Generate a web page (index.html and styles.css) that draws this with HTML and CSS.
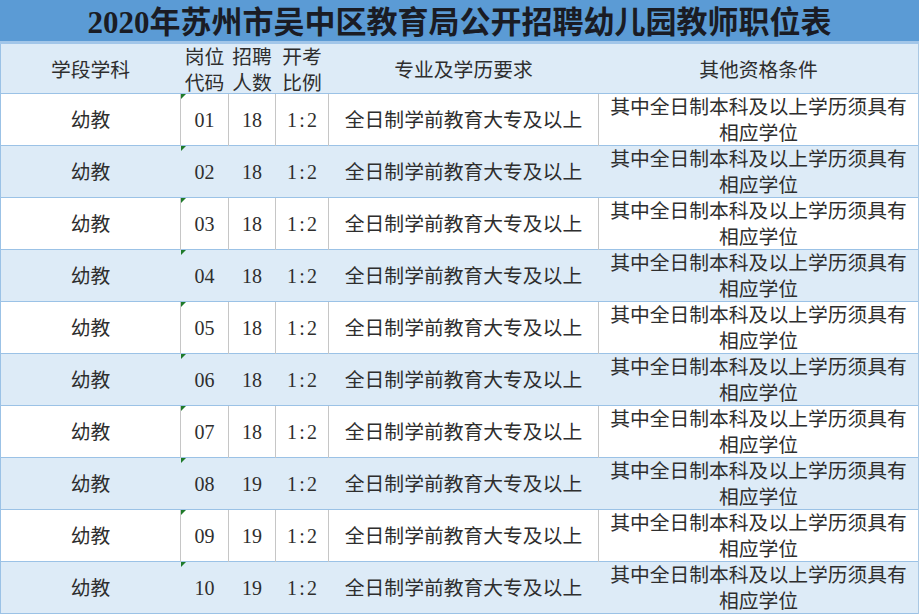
FILE: index.html
```html
<!DOCTYPE html>
<html lang="zh-CN">
<head>
<meta charset="utf-8">
<title>2020年苏州市吴中区教育局公开招聘幼儿园教师职位表</title>
<link rel="stylesheet" href="styles.css">
</head>
<body>
<div class="sheet">
  <div class="title">2020年苏州市吴中区教育局公开招聘幼儿园教师职位表</div>
  <div class="rows">
    <div class="row head">
      <div class="c">学段学科</div>
      <div class="c two">岗位<br>代码</div>
      <div class="c two">招聘<br>人数</div>
      <div class="c two">开考<br>比例</div>
      <div class="c">专业及学历要求</div>
      <div class="c">其他资格条件</div>
    </div>
    <div class="row odd">
      <div class="c">幼教</div><div class="c num flag">01</div><div class="c num">18</div><div class="c num">1<span class="colon">:</span>2</div>
      <div class="c">全日制学前教育大专及以上</div><div class="c two">其中全日制本科及以上学历须具有<br>相应学位</div>
    </div>
    <div class="row even">
      <div class="c">幼教</div><div class="c num flag">02</div><div class="c num">18</div><div class="c num">1<span class="colon">:</span>2</div>
      <div class="c">全日制学前教育大专及以上</div><div class="c two">其中全日制本科及以上学历须具有<br>相应学位</div>
    </div>
    <div class="row odd">
      <div class="c">幼教</div><div class="c num flag">03</div><div class="c num">18</div><div class="c num">1<span class="colon">:</span>2</div>
      <div class="c">全日制学前教育大专及以上</div><div class="c two">其中全日制本科及以上学历须具有<br>相应学位</div>
    </div>
    <div class="row even">
      <div class="c">幼教</div><div class="c num flag">04</div><div class="c num">18</div><div class="c num">1<span class="colon">:</span>2</div>
      <div class="c">全日制学前教育大专及以上</div><div class="c two">其中全日制本科及以上学历须具有<br>相应学位</div>
    </div>
    <div class="row odd">
      <div class="c">幼教</div><div class="c num flag">05</div><div class="c num">18</div><div class="c num">1<span class="colon">:</span>2</div>
      <div class="c">全日制学前教育大专及以上</div><div class="c two">其中全日制本科及以上学历须具有<br>相应学位</div>
    </div>
    <div class="row even">
      <div class="c">幼教</div><div class="c num flag">06</div><div class="c num">18</div><div class="c num">1<span class="colon">:</span>2</div>
      <div class="c">全日制学前教育大专及以上</div><div class="c two">其中全日制本科及以上学历须具有<br>相应学位</div>
    </div>
    <div class="row odd">
      <div class="c">幼教</div><div class="c num flag">07</div><div class="c num">18</div><div class="c num">1<span class="colon">:</span>2</div>
      <div class="c">全日制学前教育大专及以上</div><div class="c two">其中全日制本科及以上学历须具有<br>相应学位</div>
    </div>
    <div class="row even">
      <div class="c">幼教</div><div class="c num flag">08</div><div class="c num">19</div><div class="c num">1<span class="colon">:</span>2</div>
      <div class="c">全日制学前教育大专及以上</div><div class="c two">其中全日制本科及以上学历须具有<br>相应学位</div>
    </div>
    <div class="row odd">
      <div class="c">幼教</div><div class="c num flag">09</div><div class="c num">19</div><div class="c num">1<span class="colon">:</span>2</div>
      <div class="c">全日制学前教育大专及以上</div><div class="c two">其中全日制本科及以上学历须具有<br>相应学位</div>
    </div>
    <div class="row even">
      <div class="c">幼教</div><div class="c num flag">10</div><div class="c num">19</div><div class="c num">1<span class="colon">:</span>2</div>
      <div class="c">全日制学前教育大专及以上</div><div class="c two">其中全日制本科及以上学历须具有<br>相应学位</div>
    </div>
  </div>
</div>
</body>
</html>
```

FILE: styles.css
```css
html, body {
  margin: 0;
  padding: 0;
  background: #ffffff;
}

body {
  width: 921px;
  height: 614px;
  overflow: hidden;
  font-family: "Liberation Serif", "Noto Sans CJK SC", serif;
  color: #2e2e2e;
}

.sheet {
  display: flex;
  flex-direction: column;
}

.title {
  box-sizing: content-box;
  height: 36px;
  padding-top: 5px;
  width: 919px;
  background: #5b9bd5;
  border-bottom: 3px solid #a2c6e9;
  text-align: center;
  font-size: 31px;
  font-weight: bold;
  line-height: 36px;
  color: #1a1c24;
}

.rows {
  width: 919px;
  box-sizing: border-box;
  border-left: 1px solid #9bc2e6;
  border-right: 1px solid #a9c8e4;
}

.row {
  display: grid;
  grid-template-columns: 180px 48px 47px 53px 270px 319px;
  height: 52px;
  box-sizing: border-box;
  border-bottom: 1px solid #9bc2e6;
}

.row.head {
  height: 50px;
  background: #ddebf7;
}

.row.even {
  background: #ddebf7;
}

.row.odd {
  background: #ffffff;
}

.c {
  position: relative;
  display: flex;
  align-items: center;
  justify-content: center;
  text-align: center;
  box-sizing: border-box;
  font-size: 19.8px;
  line-height: 26px;
  white-space: nowrap;
  border-right: 1px solid transparent;
}

.c:last-child {
  border-right: none;
}

.row.odd .c {
  border-right-color: #c6c6c6;
}

.row.odd .c:last-child {
  border-right: none;
}

.num {
  font-size: 20px;
}

.colon {
  display: inline-block;
  width: 10px;
  text-align: center;
}

.flag::before {
  content: "";
  position: absolute;
  left: 0;
  top: 0;
  width: 0;
  height: 0;
  border-top: 5px solid #1f7a2a;
  border-right: 5px solid transparent;
}
```
